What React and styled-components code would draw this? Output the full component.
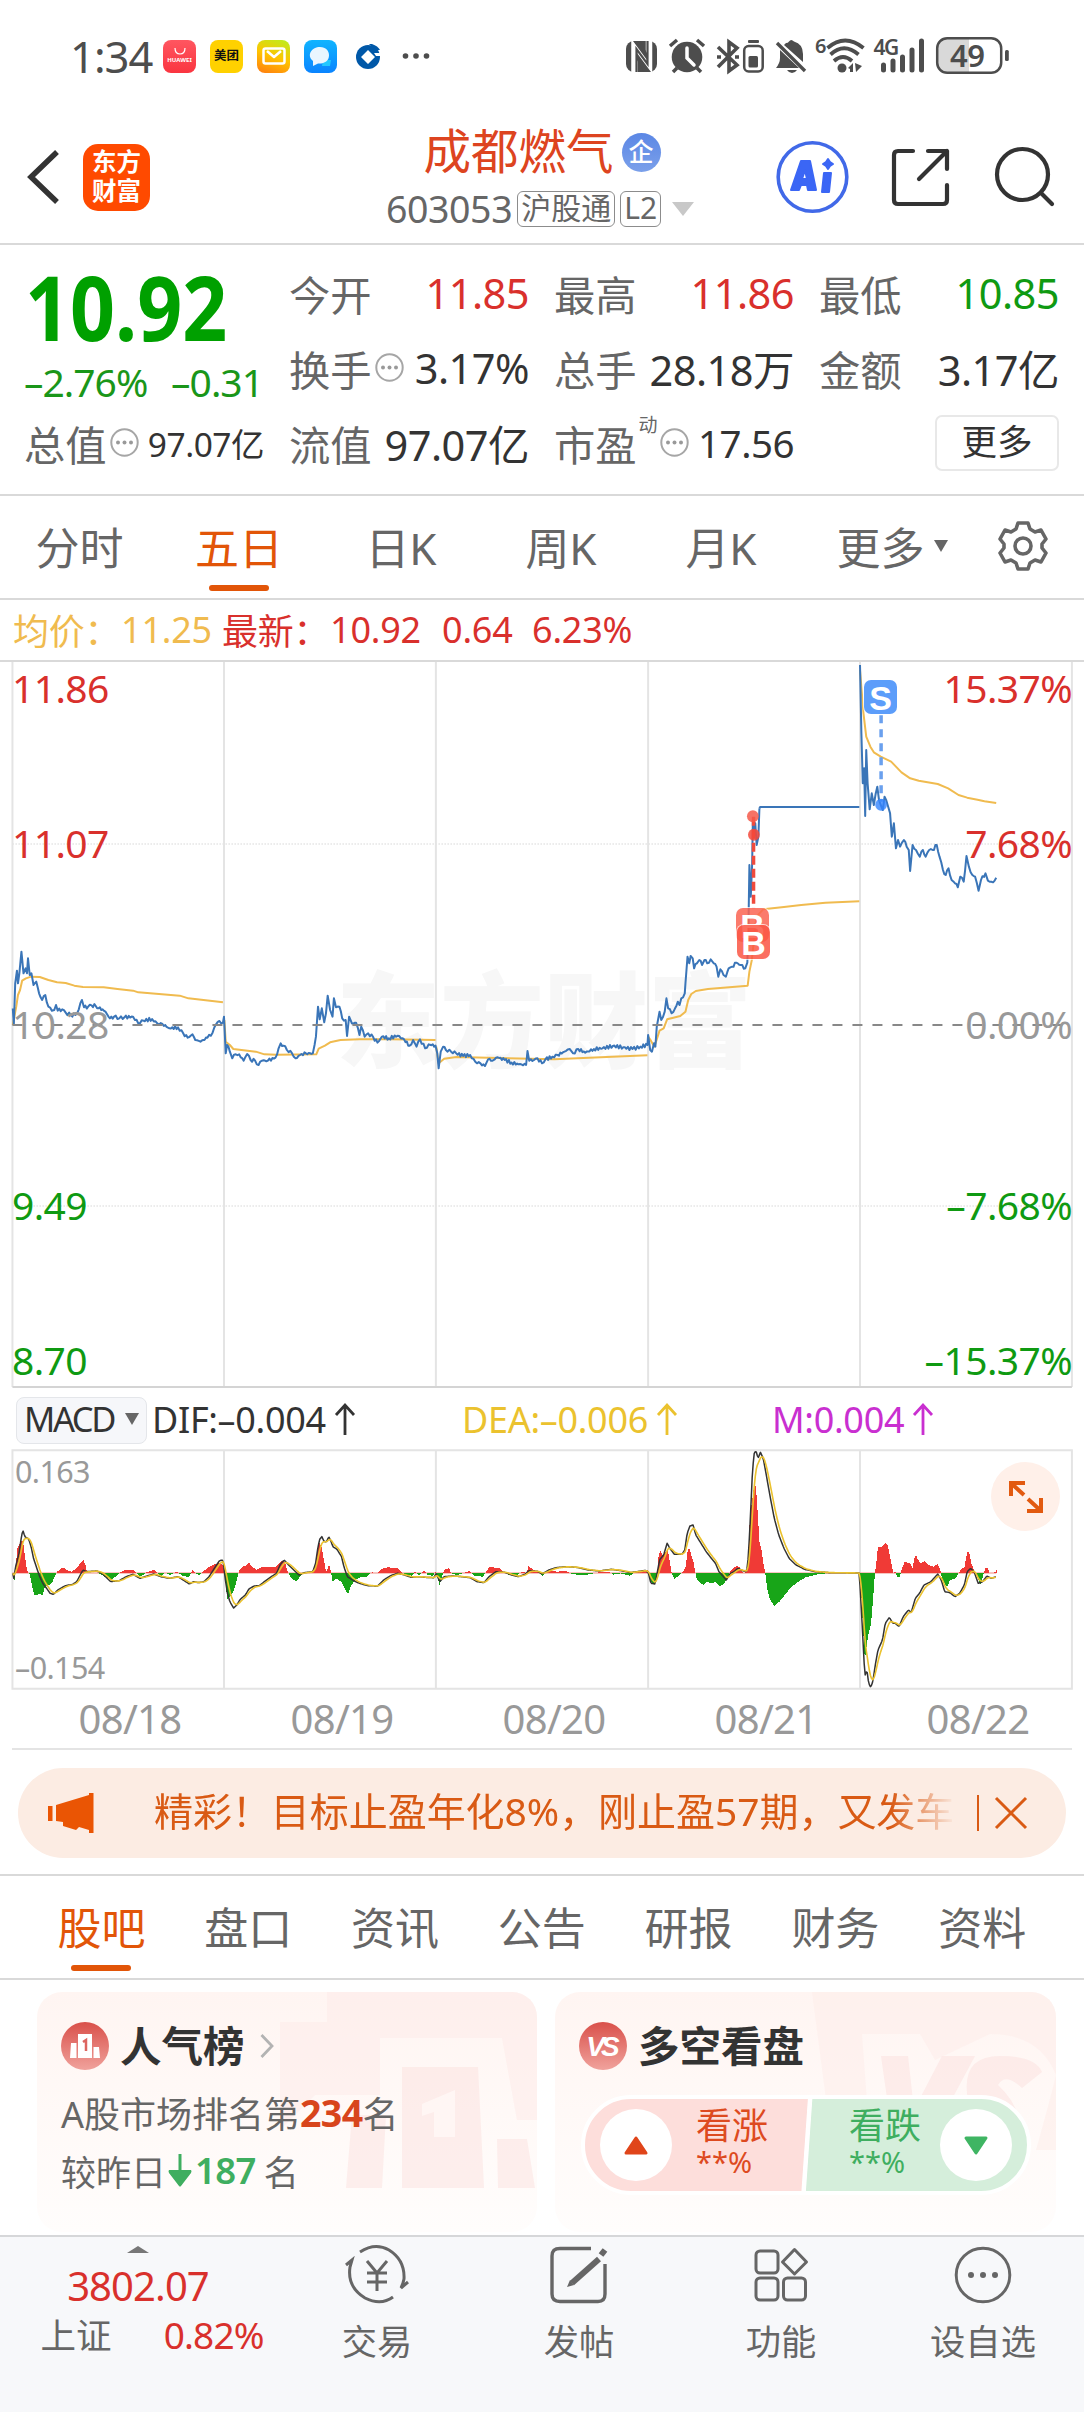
import styled, { createGlobalStyle } from 'styled-components';

const colors = {
     red: '#d9302c',
     green: '#0f9a12',
     brand: '#e25508',
     grey: '#666666',
     dark: '#333333',
     muted: '#999999',
     line: '#d9d9d9',
     price: '#3a75b8',
     average: '#f0bb4f',
};

const GlobalStyle = createGlobalStyle`
     * {
          box-sizing: border-box;
     }
     body {
          margin: 0;
          background: #ffffff;
          color: ${colors.dark};
          font-family: 'Noto Sans', 'Noto Sans CJK SC', sans-serif;
     }
     svg {
          display: block;
          flex: none;
          overflow: visible;
     }
`;

const Page = styled.div`
     width: 1084px;
     height: 2412px;
     overflow: hidden;
     display: flex;
     flex-direction: column;
`;

/* ---------- status bar ---------- */

const StatusBar = styled.div`
     height: 112px;
     padding: 0 74px 0 70px;
     display: flex;
     justify-content: space-between;
     flex: none;
`;

const StatusGroup = styled.div`
     height: 112px;
     display: flex;
     align-items: center;
`;

const Clock = styled.span`
     width: 93px;
     font-size: 43.5px;
     line-height: 50px;
     letter-spacing: -1px;
     color: #4d4d4d;
`;

const AppBadge = styled.span`
     width: 33px;
     height: 33px;
     margin-right: 14px;
     border-radius: 8px;
     display: flex;
     align-items: center;
     justify-content: center;
     background: ${({ $background }) => $background};
     color: ${({ $color }) => $color || '#ffffff'};
     font-size: ${({ $size }) => $size || 12.5}px;
     line-height: 16px;
     font-weight: 700;
     white-space: nowrap;
`;

const HuaweiName = styled.span`
     font-size: 6px;
     line-height: 8px;
     margin-top: 1px;
`;

const HuaweiBadge = styled(AppBadge)`
     flex-direction: column;
`;

/* ---------- header ---------- */

const Header = styled.header`
     height: 133px;
     display: grid;
     grid-template-columns: 300px 1fr 300px;
     border-bottom: 2px solid ${colors.line};
     flex: none;
`;

const HeaderSide = styled.div`
     height: 130px;
     display: flex;
     align-items: center;
     justify-content: ${({ $end }) => ($end ? 'flex-end' : 'flex-start')};
     padding: ${({ $end }) => ($end ? '0 30px 0 0' : '0 0 0 26px')};
     gap: ${({ $gap }) => $gap}px;
`;

const Logo = styled.div`
     width: 67px;
     height: 67px;
     border-radius: 15px;
     background: #ff4a00;
     color: #ffffff;
     font-size: 24.5px;
     line-height: 29px;
     font-weight: 700;
     text-align: center;
     padding-top: 3px;
`;

const HeaderCenter = styled.div`
     display: flex;
     flex-direction: column;
     align-items: center;
`;

const TitleRow = styled.div`
     height: 60px;
     margin-top: 9px;
     display: flex;
     align-items: center;
     gap: 8px;
     font-size: 47.5px;
     line-height: 60px;
     color: #dd4420;
`;

const CompanyBadge = styled.span`
     width: 39px;
     height: 39px;
     margin-top: 2px;
     border-radius: 50%;
     background: linear-gradient(#5b87e5, #7ba0ea);
     color: #ffffff;
     font-size: 25px;
     line-height: 37px;
     font-weight: 500;
     text-align: center;
`;

const CodeRow = styled.div`
     height: 55px;
     margin-right: 4px;
     display: flex;
     align-items: center;
     font-size: 37.5px;
     letter-spacing: -0.4px;
     color: ${colors.grey};
`;

const Tag = styled.span`
     height: 36px;
     margin-left: 5px;
     padding: 0 3px;
     border: 1.5px solid #8c8c8c;
     border-radius: 6px;
     font-size: 30px;
     line-height: 31px;
     letter-spacing: 0;
`;

const Caret = styled.span`
     width: 0;
     height: 0;
     border-left: ${({ $w }) => $w}px solid transparent;
     border-right: ${({ $w }) => $w}px solid transparent;
     border-top: ${({ $h }) => $h}px solid ${({ $color }) => $color};
     margin-left: ${({ $left }) => $left || 0}px;
`;

/* ---------- quote ---------- */

const Quote = styled.section`
     height: 251px;
     border-bottom: 2px solid ${colors.line};
     padding: 10px 25px 0 24px;
     display: grid;
     grid-template-columns: 265px 240px 25px 240px 25px 240px;
     grid-template-rows: 75px 75px 75px;
     flex: none;
`;

const PriceBox = styled.div`
     grid-row: span 2;
     color: #00a000;
     padding-top: 9px;
`;

const BigPrice = styled.div`
     font-size: 89px;
     line-height: 86px;
     font-weight: 700;
     margin-left: 1px;
     transform: scaleX(0.885);
     transform-origin: left;
`;

const ChangeRow = styled.div`
     display: flex;
     justify-content: space-between;
     width: 239px;
     margin-top: 9px;
     font-size: 39px;
     line-height: 46px;
     letter-spacing: -1px;
     color: #1a9619;
`;

const Cell = styled.div`
     height: 75px;
     display: flex;
     align-items: center;
     justify-content: space-between;
     width: ${({ $width }) => $width || 240}px;
     grid-column: ${({ $col }) => $col};
`;

const CellLabel = styled.span`
     display: flex;
     align-items: center;
     gap: 3px;
     font-size: 41.3px;
     color: ${colors.grey};
     white-space: nowrap;
`;

const CellValue = styled.span`
     font-size: ${({ $size }) => $size || 41.5}px;
     letter-spacing: -0.5px;
     white-space: nowrap;
     color: ${({ $color }) => $color || colors.dark};
`;

const Super = styled.sup`
     font-size: 19px;
     line-height: 20px;
     align-self: flex-start;
     margin: 2px -1px 0 -1px;
`;

const MoreButton = styled.button`
     width: 124px;
     height: 56px;
     margin-left: auto;
     border: 2px solid #e8e8e8;
     border-radius: 7px;
     background: #ffffff;
     font: inherit;
     font-size: 35.5px;
     line-height: 46px;
     padding: 0 0 4px;
     color: ${colors.dark};
`;

/* ---------- tabs ---------- */

const PeriodTabs = styled.nav`
     height: 104px;
     border-bottom: 2px solid ${colors.line};
     display: flex;
     flex: none;
`;

const Tab = styled.div`
     position: relative;
     width: ${({ $width }) => $width}px;
     height: 102px;
     padding-bottom: 3px;
     display: flex;
     align-items: center;
     justify-content: center;
     font-size: 44px;
     color: ${({ $active }) => ($active ? colors.brand : colors.grey)};
     &::after {
          content: '';
          display: ${({ $active }) => ($active ? 'block' : 'none')};
          position: absolute;
          bottom: 7px;
          left: calc(50% - 30px);
          width: 60px;
          height: 6px;
          border-radius: 3px;
          background: ${colors.brand};
     }
`;

const PriceLegend = styled.div`
     height: 62px;
     border-bottom: 2px solid ${colors.line};
     padding: 0 0 2px 13px;
     display: flex;
     align-items: center;
     font-size: 36px;
     letter-spacing: -0.2px;
     color: ${colors.red};
     flex: none;
     white-space: pre;
`;

const LegendItem = styled.span`
     width: ${({ $width }) => $width}px;
     color: ${({ $color }) => $color || colors.red};
`;

/* ---------- charts ---------- */

const PriceChart = styled.div`
     position: relative;
     height: 726px;
     flex: none;
`;

const Plot = styled.svg`
     width: 1084px;
     height: ${({ $height }) => $height}px;
`;

const Watermark = styled.div`
     position: absolute;
     left: 336px;
     top: 294px;
     font-size: 104px;
     line-height: 118px;
     font-weight: 900;
     font-family: 'Noto Sans CJK SC', sans-serif;
     color: #f7f7f7;
     z-index: -1;
`;

const AxisLabel = styled.span`
     position: absolute;
     top: ${({ $top }) => $top}px;
     ${({ $right, $left }) => ($right ? 'right: 12px;' : `left: ${$left || 12}px;`)}
     font-size: ${({ $size }) => $size || 39}px;
     line-height: 46px;
     letter-spacing: -0.6px;
     color: ${({ $color }) => $color};
`;

const MarkerBadge = styled.span`
     position: absolute;
     left: ${({ $left }) => $left}px;
     top: ${({ $top }) => $top}px;
     width: 33px;
     height: 34px;
     border-radius: 7px;
     background: ${({ $color }) => $color};
     box-shadow: 0 0 0 1px rgba(255, 255, 255, 0.7);
     color: #ffffff;
     font-family: 'Liberation Sans', sans-serif;
     font-size: 34px;
     line-height: 36px;
     font-weight: 700;
     text-align: center;
`;

const MacdLegend = styled.div`
     height: 62px;
     padding: 0 0 0 16px;
     display: flex;
     align-items: center;
     font-size: 36px;
     letter-spacing: -0.3px;
     flex: none;
`;

const MacdSelect = styled.div`
     width: 131px;
     height: 47px;
     margin: 3px 5px 0 0;
     padding: 0 0 4px 7px;
     border: 1.5px solid #e4e6ea;
     border-radius: 8px;
     background: #f6f7fa;
     display: flex;
     align-items: center;
     font-size: 34.5px;
     letter-spacing: -2.4px;
`;

const MacdItem = styled.span`
     display: flex;
     align-items: center;
     gap: 9px;
     width: ${({ $width }) => $width}px;
     color: ${({ $color }) => $color};
     white-space: nowrap;
`;

const MacdChart = styled.div`
     position: relative;
     height: 240px;
     flex: none;
`;

const ExpandButton = styled.div`
     position: absolute;
     left: 991px;
     top: 12px;
     width: 69px;
     height: 69px;
     border-radius: 50%;
     background: #fff0e9;
     display: flex;
     align-items: center;
     justify-content: center;
`;

const Dates = styled.div`
     height: 60px;
     margin: 0 12px;
     border-bottom: 2px solid #e4e4e4;
     display: grid;
     grid-template-columns: repeat(5, 1fr);
     text-align: center;
     font-size: 40px;
     line-height: 57px;
     letter-spacing: -0.7px;
     color: ${colors.muted};
     flex: none;
     & > span {
          padding-left: 24px;
     }
`;

/* ---------- notice ---------- */

const NoticeWrap = styled.div`
     height: 126px;
     padding: 18px;
     border-bottom: 2px solid ${colors.line};
     flex: none;
`;

const Notice = styled.div`
     height: 90px;
     border-radius: 45px;
     background: #fcece3;
     padding-left: 29px;
     display: flex;
     align-items: center;
     color: #d95a14;
`;

const NoticeText = styled.div`
     width: 810px;
     margin: 0 13px 4px 60px;
     overflow: hidden;
     white-space: nowrap;
     font-size: 39px;
     line-height: 60px;
     letter-spacing: -0.05px;
     mask-image: linear-gradient(90deg, #000 91%, transparent 99%);
`;

const Divider = styled.span`
     width: 1.5px;
     height: 36px;
     margin-right: 15px;
     background: #d95a14;
`;

const SectionTabs = styled.nav`
     height: 104px;
     padding-left: 28px;
     border-bottom: 2px solid ${colors.line};
     display: flex;
     flex: none;
`;

/* ---------- cards ---------- */

const Cards = styled.div`
     height: 255px;
     padding: 12px 28px 0 37px;
     display: grid;
     grid-template-columns: 500px 501px;
     gap: 18px;
     flex: none;
`;

const Card = styled.div`
     position: relative;
     height: 240px;
     border-radius: 25px;
     overflow: hidden;
     padding: 24px 24px 0;
     background: linear-gradient(#fff5f2, #fff9f7 50%, #fffdfc);
`;

const CardArt = styled.svg`
     position: absolute;
     right: 0;
     top: 0;
`;

const CardTitle = styled.div`
     position: relative;
     display: flex;
     align-items: center;
     height: 60px;
     font-size: 41.5px;
     font-weight: 700;
     & > svg:first-child {
          margin-right: 11px;
     }
     & > span {
          padding-bottom: 4px;
     }
`;

const CardLine = styled.div`
     display: flex;
     align-items: center;
     position: relative;
     height: 58px;
     margin-top: ${({ $first }) => ($first ? 7 : 0)}px;
     font-size: ${({ $first }) => ($first ? 36 : 35)}px;
     color: ${colors.grey};
     white-space: nowrap;
`;

const Strong = styled.b`
     font-size: ${({ $size }) => $size}px;
     font-weight: ${({ $weight }) => $weight};
     letter-spacing: -0.6px;
     margin: ${({ $margin }) => $margin || 0};
     color: ${({ $color }) => $color};
`;

const Pill = styled.div`
     position: relative;
     display: flex;
     width: 450px;
     height: 100px;
     margin: 19px 0 0 2px;
     border: 4px solid #ffffff;
     border-radius: 50px;
     overflow: hidden;
     background: linear-gradient(94deg, #fddedb 49.6%, #ffffff 49.8%, #ffffff 50.6%, #d5eedb 50.8%);
`;

const PillHalf = styled.div`
     flex: 1;
     display: flex;
     flex-direction: ${({ $reverse }) => ($reverse ? 'row-reverse' : 'row')};
     align-items: center;
     padding: 0 15px;
     gap: ${({ $reverse }) => ($reverse ? 19 : 24)}px;
     color: ${({ $color }) => $color};
`;

const PillButton = styled.span`
     width: 72px;
     height: 72px;
     border-radius: 50%;
     background: #ffffff;
     display: flex;
     align-items: center;
     justify-content: center;
`;

const PillText = styled.span`
     font-size: 36px;
     line-height: 40px;
     padding-bottom: 6px;
     & > small {
          display: block;
          font-size: 29px;
          line-height: 32px;
     }
`;

/* ---------- bottom bar ---------- */

const BottomBar = styled.footer`
     height: 177px;
     border-top: 2px solid #d6d7d9;
     background: #f7f8fa;
     display: flex;
     flex: none;
`;

const IndexBox = styled.div`
     width: 276px;
     padding-top: 9px;
     display: flex;
     flex-direction: column;
     align-items: center;
     color: ${colors.red};
`;

const IndexValue = styled.div`
     margin-top: 8px;
     font-size: 40px;
     line-height: 50px;
     letter-spacing: -0.9px;
`;

const IndexRow = styled.div`
     width: 223px;
     margin: -1px 0 0 28px;
     display: flex;
     justify-content: space-between;
     font-size: 37px;
     line-height: 50px;
     letter-spacing: -0.9px;
     & > span {
          font-size: 35.5px;
          letter-spacing: 0;
          color: ${colors.grey};
     }
`;

const NavItem = styled.div`
     width: 202px;
     padding-top: 8px;
     display: flex;
     flex-direction: column;
     align-items: center;
     font-size: 35.3px;
     line-height: 50px;
     color: ${colors.grey};
     & > span {
          margin-top: 11px;
     }
`;

/* Chart series, one array per trading day. x runs 0-3136 over the screen width,
   y has three units per pixel. */
const priceDays = [
     [37,1075,40,1125,44,1000,49,962,52,1000,56,970,62,905,68,970,74,955,78,970,81,925,86,975,91,970,97,1005,105,995,113,1030,122,1050,131,1035,140,1070,150,1082,157,1080,162,1065,167,1082,180,1078,190,1088,205,1095,218,1095,228,1078,237,1050,243,1072,255,1070,265,1066,277,1068,285,1075,297,1078,305,1085,318,1105,330,1100,345,1105,360,1102,385,1100,400,1120,415,1112,440,1107,455,1120,470,1122,490,1135,515,1132,530,1150,543,1163,557,1153,565,1170,580,1175,600,1163,615,1148,625,1123,635,1113,645,1118,
     648,1100,653,1210,657,1185,665,1205,672,1225,682,1213,692,1213,705,1232,715,1212,725,1230,738,1232,748,1245,758,1232,775,1232,797,1223,806,1195,812,1180,820,1187,830,1200,845,1210,855,1225,868,1215,885,1210,905,1210,910,1185,914,1160,920,1070,925,1108,931,1075,938,1117,943,1090,948,1037,955,1080,962,1100,966,1045,972,1072,982,1070,990,1105,1000,1110,1004,1158,1010,1100,1018,1120,1030,1118,1040,1155,1045,1130,1055,1160,1065,1150,1080,1162,1092,1178,1105,1160,1125,1165,1150,1157,1165,1165,1185,1187,1195,1170,1205,1190,1215,1168,1230,1195,1240,1183,1260,1187,
     1265,1210,1269,1255,1275,1205,1282,1190,1290,1200,1305,1205,1320,1210,1340,1218,1360,1215,1375,1235,1390,1240,1403,1248,1412,1228,1425,1232,1440,1222,1460,1230,1480,1238,1500,1243,1522,1245,1526,1203,1531,1232,1545,1230,1555,1225,1568,1240,1578,1228,1598,1220,1613,1215,1633,1205,1648,1197,1658,1210,1673,1197,1693,1208,1718,1197,1743,1195,1773,1188,1803,1192,1830,1197,1853,1190,1873,1185,
     1875,1155,1881,1200,1886,1205,1892,1180,1896,1190,1900,1130,1908,1085,1913,1110,1923,1085,1928,1045,1933,1075,1943,1090,1953,1075,1961,1055,1966,1065,1971,1045,1981,1030,1983,1000,1986,960,1989,920,1994,940,1998,918,2004,925,2008,955,2016,940,2023,930,2031,945,2038,930,2046,940,2056,928,2065,940,2073,950,2078,980,2084,958,2093,975,2100,980,2108,955,2118,950,2130,938,2143,945,2156,955,2162,938,2165,850,2168,645,2172,740,2176,640,2178,510,2181,560,2185,520,2189,585,2194,560,2197,475],
     [2488,45,2492,250,2496,400,2500,355,2503,498,2506,300,2510,400,2516,478,2522,430,2528,465,2538,410,2543,450,2548,465,2554,480,2559,440,2568,465,2575,490,2580,560,2586,520,2592,595,2598,570,2604,590,2615,570,2623,590,2629,600,2633,663,2640,585,2650,600,2661,620,2670,600,2678,620,2688,600,2698,600,2710,585,2718,620,2728,660,2736,675,2744,655,2753,690,2763,700,2771,712,2778,680,2788,695,2796,618,2803,650,2813,675,2821,680,2831,722,2838,690,2851,670,2858,692,2873,697,2882,683],
];

const averageDays = [
     [37,1125,47,1070,52,1035,58,1020,64,992,75,985,90,980,115,981,140,990,165,997,190,999,215,1007,240,1011,300,1012,340,1017,385,1022,400,1027,520,1037,545,1045,645,1057],
     [649,1110,653,1175,665,1185,675,1197,740,1205,765,1213,800,1214,915,1213,922,1196,940,1187,955,1177,985,1170,1040,1168,1130,1168,1260,1170],
     [1262,1190,1269,1240,1285,1226,1320,1221,1568,1227,1603,1228,1873,1216],
     [1875,1160,1883,1172,1893,1190,1901,1165,1908,1142,1920,1135,1930,1108,1948,1103,1968,1098,1983,1085,1991,1050,2000,1032,2013,1023,2048,1017,2163,1007,2168,965,2175,930,2180,880,2188,800,2208,778,2268,771,2318,765,2388,758,2486,754],
     [2488,60,2498,190,2506,260,2518,290,2528,307,2548,320,2578,335,2608,367,2633,385,2658,392,2713,402,2743,415,2773,435,2798,443,2828,449,2848,454,2882,459],
];

const ZERO = 429;

const histogram = [37,445,40,450,44,400,49,350,53,345,57,335,62,330,66,345,70,380,76,420,80,428,84,432,90,465,97,495,110,493,122,494,128,470,140,465,150,455,158,435,163,425,180,412,192,420,205,425,220,415,230,400,239,390,245,405,250,428,285,430,300,440,320,448,332,440,345,428,360,420,385,420,392,428,405,440,420,428,445,419,455,430,465,438,475,428,490,435,510,425,525,437,545,442,555,420,563,430,575,435,585,425,600,412,630,398,640,402,647,420,650,450,655,508,665,498,675,480,683,450,690,420,700,410,712,405,718,396,725,408,740,420,755,412,795,412,812,392,822,395,830,425,840,443,855,455,870,435,880,427,905,425,912,400,918,350,922,338,928,350,935,390,941,425,946,415,950,402,956,428,960,455,970,445,985,455,995,475,1005,493,1012,470,1025,450,1040,442,1060,440,1070,430,1075,427,1090,430,1100,417,1120,412,1150,415,1160,428,1175,435,1190,437,1198,425,1210,437,1225,420,1235,435,1250,437,1258,425,1264,440,1269,468,1275,445,1283,420,1297,414,1303,430,1320,436,1355,423,1370,437,1395,440,1405,425,1412,412,1440,413,1455,425,1470,435,1490,437,1510,425,1522,430,1527,407,1535,415,1560,430,1568,438,1573,430,1588,423,1613,425,1633,422,1648,430,1678,436,1703,433,1723,428,1758,425,1773,434,1793,430,1821,437,1833,428,1868,420,1874,422,1878,445,1886,462,1893,460,1899,430,1903,380,1908,360,1915,375,1923,365,1930,360,1935,390,1941,430,1950,447,1963,435,1976,422,1982,410,1986,370,1991,352,1998,375,2005,400,2009,425,2013,445,2023,458,2033,465,2043,455,2058,460,2068,455,2080,470,2093,460,2103,440,2113,420,2128,408,2138,412,2148,428,2158,427,2162,400,2165,300,2169,250,2174,210,2180,165,2185,170,2190,250,2195,335,2201,360,2208,410,2212,430,2218,480,2226,510,2238,527,2253,515,2268,495,2288,470,2308,455,2328,442,2358,434,2388,430,2486,428,2490,500,2495,600,2500,690,2506,640,2511,610,2518,580,2525,490,2529,430,2534,390,2538,350,2548,350,2555,345,2560,338,2566,345,2571,370,2576,395,2582,430,2588,423,2593,440,2601,440,2606,420,2615,395,2633,402,2638,415,2643,385,2648,375,2654,390,2663,400,2673,392,2683,405,2698,410,2710,402,2718,420,2723,445,2733,465,2740,470,2746,450,2763,445,2771,430,2778,418,2788,412,2796,365,2802,368,2808,400,2818,425,2826,440,2833,465,2840,445,2848,415,2855,413,2861,430,2870,430,2878,425,2882,418];

const dif = [37,430,40,445,45,410,55,370,62,320,66,300,72,320,83,327,90,350,97,385,105,410,115,440,125,462,135,475,145,490,155,493,165,482,175,475,190,467,210,463,222,455,232,435,240,420,250,425,280,423,295,430,310,445,320,455,345,452,365,440,385,433,405,445,425,438,445,432,465,440,490,445,515,440,530,450,548,462,560,455,575,458,590,455,605,440,620,415,635,392,645,390,652,450,658,490,665,515,676,534,685,525,695,508,710,495,720,477,735,468,750,467,765,455,785,440,800,430,810,405,822,390,835,405,850,420,865,435,880,428,905,425,913,400,920,350,925,328,931,320,938,335,945,335,951,320,958,335,963,350,975,358,988,380,995,410,1005,440,1020,450,1035,458,1050,463,1065,467,1092,468,1110,450,1130,437,1150,430,1170,435,1190,442,1210,440,1230,442,1255,443,1262,430,1272,455,1285,440,1310,438,1335,440,1360,443,1380,455,1400,458,1415,440,1435,425,1460,427,1480,435,1500,440,1520,432,1530,422,1555,424,1568,432,1588,420,1608,413,1638,410,1668,412,1703,420,1733,423,1768,418,1798,422,1823,428,1868,421,1876,430,1883,460,1895,462,1901,430,1908,390,1920,375,1930,340,1938,355,1951,373,1973,373,1981,360,1988,310,1996,288,2005,285,2013,315,2028,340,2043,365,2058,385,2070,400,2080,425,2093,440,2101,450,2113,430,2123,425,2135,415,2148,422,2160,425,2165,380,2171,260,2177,120,2182,70,2187,62,2193,85,2200,67,2208,85,2216,130,2228,200,2240,265,2253,315,2268,355,2283,385,2303,405,2328,418,2358,425,2398,428,2486,429,2493,560,2500,700,2503,735,2508,720,2513,760,2519,772,2525,755,2533,700,2540,660,2553,630,2561,580,2573,562,2583,580,2590,580,2601,590,2613,560,2628,540,2636,548,2648,505,2660,490,2673,465,2693,455,2713,432,2723,450,2733,485,2748,488,2763,500,2776,490,2790,465,2798,425,2808,415,2818,425,2830,460,2843,455,2855,438,2868,445,2882,440];

// Resamples a flat [x, y, x, y...] list at a fixed step.
function resample(flat, step) {
     const points = [];
     let i = 0;
     for (let x = flat[0]; x <= flat[flat.length - 2]; x += step) {
          while (i < flat.length - 4 && flat[i + 2] < x) i += 2;
          const ratio = (x - flat[i]) / (flat[i + 2] - flat[i]);
          points.push([x, flat[i + 1] + (flat[i + 3] - flat[i + 1]) * ratio]);
     }
     return points;
}

function withTicks(flat) {
     const points = [];
     for (let i = 0; i < flat.length; i += 2) {
          points.push([flat[i], flat[i + 1]]);
          const gap = flat[i + 2] - flat[i];
          const count = Math.floor(gap / 4);
          for (let k = 1; k < count; k++) {
               const ratio = k / count;
               const tick = Math.sin(flat[i] * 12.9898 + k * 78.233) * 5;
               points.push([
                    flat[i] + gap * ratio,
                    flat[i + 1] + (flat[i + 3] - flat[i + 1]) * ratio + tick,
               ]);
          }
     }
     return points;
}

function toPairs(flat) {
     return flat.reduce((all, value, index) => {
          if (index % 2 === 0) all.push([value, flat[index + 1]]);
          return all;
     }, []);
}

function smooth(points, alpha) {
     let last = points[0][1];
     return points.map(([x, y]) => {
          last += (y - last) * alpha;
          return [x, last];
     });
}

function Line({ points, color, width = 2 }) {
     return (
          <polyline
               points={points.map((p) => p.join(',')).join(' ')}
               fill="none"
               stroke={color}
               strokeWidth={width}
               strokeLinejoin="round"
               vectorEffect="non-scaling-stroke"
          />
     );
}

function InfoDots() {
     return (
          <svg width="29" height="29" viewBox="0 0 29 29">
               <circle cx="14.5" cy="14.5" r="13.2" fill="none" stroke="#a6a6a6" strokeWidth="2" />
               <g fill="#999">
                    <circle cx="8" cy="14.5" r="2" />
                    <circle cx="14.5" cy="14.5" r="2" />
                    <circle cx="21" cy="14.5" r="2" />
               </g>
          </svg>
     );
}

function UpArrow() {
     return (
          <svg width="20" height="32" viewBox="0 0 20 32" fill="none" stroke="currentColor" strokeWidth="2.8">
               <path d="M10 32V3M1 12L10 2L19 12" />
          </svg>
     );
}

function StatusIcons() {
     return (
          <svg width="384" height="38" viewBox="627 37 384 38" fill="#4d4d4d">
               {/* nfc */}
               <rect x="627" y="41" width="31" height="31" rx="8" />
               <path d="M635.5 41V72M650 41V72M635.5 46L650 68" stroke="#fff" strokeWidth="6.5" fill="none" />
               <path d="M637.5 72V49L648.500 64V41" stroke="#4d4d4d" strokeWidth="2.200" fill="none" />
               <path d="M634 41H641L648 53V60ZM652 72H645L638 60V53Z" />
               {/* alarm */}
               <circle cx="688" cy="57" r="15.3" />
               <path d="M671 46L678 40M705 46L698 40M678 68L674 72M698 68L702 72" stroke="#4d4d4d" strokeWidth="3.5" />
               <path d="M688 48V58L695 65" stroke="#fff" strokeWidth="3.5" fill="none" strokeLinecap="round" />
               {/* bluetooth and device battery */}
               <path d="M719 47L738 65L730 71V42L738 48L719 67" stroke="#4d4d4d" strokeWidth="3.6" fill="none" />
               <path d="M718 57h4M736 57h4" stroke="#4d4d4d" strokeWidth="3.6" />
               <rect x="745.2" y="46" width="18.5" height="25.5" rx="4.5" fill="none" stroke="#4d4d4d" strokeWidth="2.5" />
               <rect x="749" y="40" width="11" height="3" rx="1" />
               <rect x="749.5" y="56" width="9.5" height="11.5" rx="1.5" />
               {/* muted bell */}
               <path d="M787 43Q789 43 790 41.5Q792 38.5 795 41.5Q804 44 804 54V62L785 45ZM781 50L800 68H777Q781 63 781 58Z" />
               <path d="M778 43L806 71" stroke="#4d4d4d" strokeWidth="3.4" />
               <path d="M788 70H798Q796 73 793 73Q790 73 788 70Z" />
               {/* wifi */}
               <text x="816" y="53" fontSize="20" fontWeight="600">6</text>
               <g fill="none" stroke="#4d4d4d" strokeWidth="3.8">
                    <path d="M828.500 48Q846 33 864.500 48" />
                    <path d="M831.500 54.500Q845 42 859.500 54.500" />
                    <path d="M835 61Q844 53 853 61" />
               </g>
               <circle cx="843" cy="68" r="4.500" />
               <path d="M849 68L854 63V72H851V69ZM856 63L863 66L857 72Z" />
               {/* signal */}
               <text x="874.500" y="54.500" fontSize="21" fontWeight="600" letterSpacing="-1.500">4G</text>
               <g stroke="#4d4d4d" strokeWidth="5" strokeLinecap="round">
                    <path d="M884.500 65V70M894 61V70M903.500 57V70M913 50V70M922.500 41V70" />
               </g>
               {/* battery */}
               <path d="M948 38.500H970V72.500H948Q938.500 72.500 938.500 63V48Q938.500 38.500 948 38.500Z" fill="#d9d9d9" />
               <rect x="938.2" y="38.2" width="64" height="34.600" rx="10" fill="none" stroke="#4d4d4d" strokeWidth="2.500" />
               <rect x="1006" y="50" width="3.800" height="11" rx="1.500" />
               <text x="951" y="66.500" fontSize="31" fontWeight="600" letterSpacing="-0.500">49</text>
          </svg>
     );
}

function GearIcon() {
     return (
          <svg width="52" height="52" viewBox="0 0 52 52" fill="none" stroke="#666" strokeWidth="3.600" strokeLinejoin="round">
               <path d="M21 3H31L33 9L38 12L44 10L49 19L45 24V28L49 33L44 42L38 40L33 43L31 49H21L19 43L14 40L8 42L3 33L7 28V24L3 19L8 10L14 12L19 9Z" />
               <circle cx="26" cy="26" r="8" />
          </svg>
     );
}

function StockHeader() {
     return (
          <Header>
               <HeaderSide $gap={25}>
                    <svg width="32" height="54" viewBox="26 150 32 54" fill="none" stroke="#333" strokeWidth="5.500">
                         <path d="M57 152L31 177L57 202" />
                    </svg>
                    <Logo>
                         东方
                         <br />
                         财富
                    </Logo>
               </HeaderSide>
               <HeaderCenter>
                    <TitleRow>
                         成都燃气<CompanyBadge>企</CompanyBadge>
                    </TitleRow>
                    <CodeRow>
                         603053
                         <Tag>沪股通</Tag>
                         <Tag>L2</Tag>
                         <Caret $w={11} $h={14} $color="#c8c8c8" $left={11} />
                    </CodeRow>
               </HeaderCenter>
               <HeaderSide $end $gap={0}>
                    <svg width="278" height="72" viewBox="776 141 278 72" fill="none" stroke="#333" strokeWidth="4.200" strokeLinecap="round" strokeLinejoin="round">
                         <circle cx="812.500" cy="177" r="34.300" stroke="#4169e8" strokeWidth="3.600" />
                         <g fill="#3b66f5" stroke="#3b66f5" strokeWidth="2">
                              <path fillRule="evenodd" d="M801 161H810L816 190H808L807 185H801L799 190H791ZM805 170L802 179H807Z" />
                              <path d="M824 173H831L829 192H822ZM828 159L830 162L833 164L830 166L828 169L826 166L823 164L826 162Z" />
                         </g>
                         <path d="M913 151H898Q894 151 894 155V200Q894 204 898 204H943Q947 204 947 200V185M928 151H947V169M947 151L919 179" />
                         <circle cx="1022.500" cy="174.500" r="25.500" />
                         <path d="M1041 193L1052 204" />
                    </svg>
               </HeaderSide>
          </Header>
     );
}

function QuotePanel() {
     return (
          <Quote>
               <PriceBox>
                    <BigPrice>10.92</BigPrice>
                    <ChangeRow>
                         <span>–2.76%</span>
                         <span>–0.31</span>
                    </ChangeRow>
               </PriceBox>
               <Cell $col={2}>
                    <CellLabel>今开</CellLabel>
                    <CellValue $color={colors.red}>11.85</CellValue>
               </Cell>
               <Cell $col={4}>
                    <CellLabel>最高</CellLabel>
                    <CellValue $color={colors.red}>11.86</CellValue>
               </Cell>
               <Cell $col={6}>
                    <CellLabel>最低</CellLabel>
                    <CellValue $color={colors.green}>10.85</CellValue>
               </Cell>
               <Cell $col={2}>
                    <CellLabel>换手<InfoDots /></CellLabel>
                    <CellValue>3.17%</CellValue>
               </Cell>
               <Cell $col={4}>
                    <CellLabel>总手</CellLabel>
                    <CellValue>28.18万</CellValue>
               </Cell>
               <Cell $col={6}>
                    <CellLabel>金额</CellLabel>
                    <CellValue>3.17亿</CellValue>
               </Cell>
               <Cell $col={1} $width={240}>
                    <CellLabel>总值<InfoDots /></CellLabel>
                    <CellValue $size={33.5}>97.07亿</CellValue>
               </Cell>
               <Cell $col={2}>
                    <CellLabel>流值</CellLabel>
                    <CellValue>97.07亿</CellValue>
               </Cell>
               <Cell $col={4}>
                    <CellLabel>
                         市盈<Super>动</Super>
                         <InfoDots />
                    </CellLabel>
                    <CellValue $size={38.5}>17.56</CellValue>
               </Cell>
               <Cell $col={6}>
                    <MoreButton>更多</MoreButton>
               </Cell>
          </Quote>
     );
}

function PriceChartPanel() {
     return (
          <PriceChart>
               <Watermark>东方财富</Watermark>
               <Plot $height={726} viewBox="0 36 3136 2178" preserveAspectRatio="none">
                    <g stroke="#e4e4e4" strokeWidth="2">
                         {[36, 648, 1261, 1875, 2488, 3101].map((x) => (
                              <path key={x} d={`M${x} 36V2211`} vectorEffect="non-scaling-stroke" />
                         ))}
                         <path d="M36 582H3101M36 1668H3101" strokeWidth="1.500" strokeDasharray="1.500 1.500" vectorEffect="non-scaling-stroke" />
                         <path d="M36 2211H3101" stroke="#d4d4d4" vectorEffect="non-scaling-stroke" />
                    </g>
                    {averageDays.map((day, index) => (
                         <Line key={`average-${index}`} points={toPairs(day)} color={colors.average} />
                    ))}
                    {priceDays.map((day, index) => (
                         <Line key={`price-${index}`} points={withTicks(day)} color={colors.price} />
                    ))}
                    <Line points={[[2197, 475], [2199, 471], [2486, 471]]} color={colors.price} />
                    <path d="M36 1125H3101" stroke="#888" strokeWidth="2" strokeDasharray="10 10" vectorEffect="non-scaling-stroke" />
                    <path d="M2549 196V455" stroke="#6aa0ee" strokeWidth="3.500" strokeDasharray="8 6" vectorEffect="non-scaling-stroke" />
                    <path d="M2180 500V775" stroke="#f04a3c" strokeWidth="3.500" strokeDasharray="9 4" vectorEffect="non-scaling-stroke" />
                    <ellipse cx="2549" cy="464" rx="17" ry="18" fill="#3385ff" opacity=".8" />
                    <ellipse cx="2178" cy="499" rx="17" ry="18" fill="#f5594a" opacity=".85" />
                    <ellipse cx="2181" cy="554" rx="17" ry="18" fill="#f5483a" opacity=".85" />
               </Plot>
               <AxisLabel $top={3} $color={colors.red}>11.86</AxisLabel>
               <AxisLabel $top={158} $color={colors.red}>11.07</AxisLabel>
               <AxisLabel $top={339} $color={colors.muted}>10.28</AxisLabel>
               <AxisLabel $top={520} $color={colors.green}>9.49</AxisLabel>
               <AxisLabel $top={675} $color={colors.green}>8.70</AxisLabel>
               <AxisLabel $right $top={3} $color={colors.red}>15.37%</AxisLabel>
               <AxisLabel $right $top={158} $color={colors.red}>7.68%</AxisLabel>
               <AxisLabel $right $top={339} $color={colors.muted}>0.00%</AxisLabel>
               <AxisLabel $right $top={520} $color={colors.green}>–7.68%</AxisLabel>
               <AxisLabel $right $top={675} $color={colors.green}>–15.37%</AxisLabel>
               <MarkerBadge $left={864} $top={18} $color="#5c9dfa">S</MarkerBadge>
               <MarkerBadge $left={736} $top={246} $color="rgba(250, 100, 82, .85)">B</MarkerBadge>
               <MarkerBadge $left={737} $top={263} $color="rgba(250, 86, 68, .85)">B</MarkerBadge>
          </PriceChart>
     );
}

function MacdPanel() {
     const bars = resample(histogram, 2.893);
     const difPoints = resample(dif, 3);
     return (
          <>
               <MacdLegend>
                    <MacdSelect>
                         MACD
                         <Caret $w={7} $h={12} $color="#666" $left={11} />
                    </MacdSelect>
                    <MacdItem $width={310} $color={colors.dark}>DIF:–0.004<UpArrow /></MacdItem>
                    <MacdItem $width={310} $color="#ebc22e">DEA:–0.006<UpArrow /></MacdItem>
                    <MacdItem $width={180} $color="#c92fd0">M:0.004<UpArrow /></MacdItem>
               </MacdLegend>
               <MacdChart>
                    <Plot $height={240} viewBox="0 60 3136 720" preserveAspectRatio="none">
                         <g stroke="#e4e4e4" strokeWidth="2" fill="none">
                              {[648, 1261, 1875, 2488].map((x) => (
                                   <path key={x} d={`M${x} 60V776`} vectorEffect="non-scaling-stroke" />
                              ))}
                              <path d="M36 61H3101V776H36Z" vectorEffect="non-scaling-stroke" />
                         </g>
                         <path d="M36 429H2882" stroke="#f08a80" strokeWidth="1" vectorEffect="non-scaling-stroke" />
                         <g shapeRendering="crispEdges">
                              {bars.map(([x, y], index) => (
                                   <rect
                                        key={`bar-${index}`}
                                        x={x}
                                        y={Math.min(y, ZERO)}
                                        width="2.950"
                                        height={Math.abs(y - ZERO)}
                                        fill={y < ZERO ? '#f03a36' : '#18a518'}
                                   />
                              ))}
                         </g>
                         <Line points={difPoints} color="#333" width={1.5} />
                         <Line points={smooth(difPoints, 0.3)} color="#ebc22e" width={1.6} />
                    </Plot>
                    <AxisLabel $top={-2} $left={15} $size={30.5} $color={colors.muted}>0.163</AxisLabel>
                    <AxisLabel $top={194} $left={15} $size={30.5} $color={colors.muted}>–0.154</AxisLabel>
                    <ExpandButton>
                         <svg width="36" height="36" viewBox="0 0 36 36" fill="none" stroke="#e25a10" strokeWidth="4">
                              <path d="M3 17V4H17M4 5L16 16M33 19V32H19M32 31L20 20" />
                         </svg>
                    </ExpandButton>
               </MacdChart>
          </>
     );
}

function PopularityCard() {
     return (
          <Card>
               <CardArt width="260" height="240" viewBox="277 1992 260 240">
                    <path d="M327 1992H537V2120L517 2120L502 2038H380V2095H315L280 2130V2022H327Z" fill="#fdeae7" opacity=".5" />
                    <path d="M402 2067H478L484 2188H402ZM352 2115H386L382 2188H346ZM497 2139H527L535 2188H498Z" fill="#fbdedb" opacity=".45" />
                    <path d="M422 2104L455 2090V2137H434V2112L422 2116Z" fill="#fff6f4" />
               </CardArt>
               <CardTitle>
                    <svg width="48" height="48" viewBox="0 0 48 48">
                         <defs>
                              <linearGradient id="badge" x1="0" y1="0" x2="0" y2="1">
                                   <stop offset="0" stopColor="#d9504a" />
                                   <stop offset="1" stopColor="#f0a29c" />
                              </linearGradient>
                         </defs>
                         <circle cx="24" cy="24" r="24" fill="url(#badge)" />
                         <path d="M17 12H31V36H17ZM10 21H15.500V36H9ZM32.500 25H38L39 36H32.500Z" fill="#fff" />
                         <path d="M22 20L25 18V29" stroke="#dd6560" strokeWidth="2.500" fill="none" />
                    </svg>
                    <span>人气榜</span>
                    <svg width="14" height="24" viewBox="0 0 14 24" fill="none" stroke="#b3b3b3" strokeWidth="2.800" style={{ marginLeft: 15 }}>
                         <path d="M1.500 1L12 12L1.500 23" />
                    </svg>
               </CardTitle>
               <CardLine $first>
                    A股市场排名第
                    <Strong $size={37.5} $weight={700} $color="#d8451c">234</Strong>名
               </CardLine>
               <CardLine>
                    较昨日
                    <svg width="24" height="34" viewBox="0 0 24 34" fill="#3fae60" style={{ marginLeft: 2 }}>
                         <path d="M10.500 1H13.500V17H23Q24 18 23 20L13 33Q12 34 11 33L1 20Q0 18 1 17H10.500Z" />
                    </svg>
                    <Strong $size={36.5} $weight={600} $color="#3fae60" $margin="0 8px 0 3px">187</Strong>名
               </CardLine>
          </Card>
     );
}

function VersusCard() {
     return (
          <Card>
               <CardArt width="250" height="240" viewBox="806 1992 250 240">
                    <path d="M812 1992H1056V2150H1036Q1050 2100 1056 2075Q1040 2034 990 2034L935 2060L920 2034H862L868 2115H828Z" fill="#fdecea" opacity=".55" />
                    <path d="M881 2056H908L914 2110L942 2056H975L930 2140H893ZM1042 2072L1022 2088Q1005 2072 998 2085Q1025 2110 1018 2140H950Q980 2125 968 2100Q960 2056 1000 2056Q1035 2056 1042 2072Z" fill="#fbe0dd" opacity=".5" />
               </CardArt>
               <CardTitle>
                    <svg width="48" height="48" viewBox="0 0 48 48">
                         <circle cx="24" cy="24" r="24" fill="url(#badge)" />
                         <text x="22" y="34" textAnchor="middle" fontFamily="Liberation Sans" fontStyle="italic" fontWeight="700" fontSize="28" letterSpacing="-4" fill="#fff">VS</text>
                    </svg>
                    <span>多空看盘</span>
               </CardTitle>
               <Pill>
                    <PillHalf $color="#dd4a20">
                         <PillButton>
                              <svg width="24" height="19" viewBox="0 0 24 19">
                                   <path d="M12 2L22 17H2Z" fill="#e0451a" stroke="#e0451a" strokeWidth="3" strokeLinejoin="round" />
                              </svg>
                         </PillButton>
                         <PillText>看涨<small>**%</small></PillText>
                    </PillHalf>
                    <PillHalf $reverse $color="#3fae60">
                         <PillButton>
                              <svg width="24" height="19" viewBox="0 0 24 19">
                                   <path d="M12 17L22 2H2Z" fill="#3fb563" stroke="#3fb563" strokeWidth="3" strokeLinejoin="round" />
                              </svg>
                         </PillButton>
                         <PillText>看跌<small>**%</small></PillText>
                    </PillHalf>
               </Pill>
          </Card>
     );
}

function Footer() {
     const icon = { width: 64, height: 60, viewBox: '0 0 64 60', fill: 'none', stroke: '#666', strokeWidth: 3 };
     return (
          <BottomBar>
               <IndexBox>
                    <svg width="22" height="7" viewBox="0 0 22 7"><path d="M0 7L11 0L22 7Z" fill="#777" /></svg>
                    <IndexValue>3802.07</IndexValue>
                    <IndexRow><span>上证</span>0.82%</IndexRow>
               </IndexBox>
               <NavItem>
                    <svg {...icon}>
                         <path d="M15 7Q30 -3 44 5Q60 15 59 34Q58 39 56 43L63 37M48 52Q36 61 20 53Q2 42 5 22L7 15L1 20" />
                         <path d="M22 16L32 28L42 16M32 28V46M22 28H42M22 37H42" />
                    </svg>
                    <span>交易</span>
               </NavItem>
               <NavItem>
                    <svg {...icon}>
                         <path d="M44 3.500H13Q5 3.500 5 11V49Q5 56.500 13 56.500H51Q58 56.500 58 49V19" strokeWidth="3.400" />
                         <path d="M52 14L25 38" strokeWidth="6" />
                         <path d="M20 42L27 40L23 35Z" fill="#666" stroke="none" />
                         <path d="M54 10L58 5" strokeWidth="6" />
                    </svg>
                    <span>发帖</span>
               </NavItem>
               <NavItem>
                    <svg {...icon}>
                         <rect x="7" y="6" width="22" height="22" rx="4" />
                         <rect x="7" y="33" width="22" height="22" rx="4" />
                         <rect x="34.500" y="33" width="22" height="22" rx="4" />
                         <path d="M45.500 4.500L57.500 17L45.500 29L33.500 17Z" strokeLinejoin="round" />
                    </svg>
                    <span>功能</span>
               </NavItem>
               <NavItem>
                    <svg {...icon}>
                         <circle cx="32" cy="30" r="26.800" />
                         <g fill="#666" stroke="none">
                              <circle cx="20" cy="30" r="3" />
                              <circle cx="32" cy="30" r="3" />
                              <circle cx="44" cy="30" r="3" />
                         </g>
                    </svg>
                    <span>设自选</span>
               </NavItem>
          </BottomBar>
     );
}

const sections = ['股吧', '盘口', '资讯', '公告', '研报', '财务', '资料'];
const dates = ['08/18', '08/19', '08/20', '08/21', '08/22'];

function App() {
     return (
          <Page>
               <GlobalStyle />
               <StatusBar>
                    <StatusGroup>
                         <Clock>1:34</Clock>
                         <HuaweiBadge $background="linear-gradient(#ff5660, #fa3540)">
                              <svg width="12" height="7" viewBox="0 0 12 7" fill="none" stroke="#fff" strokeWidth="1.200"><path d="M1 0Q1 6 6 6Q11 6 11 0" /></svg>
                              <HuaweiName>HUAWEI</HuaweiName>
                         </HuaweiBadge>
                         <AppBadge $background="#ffd100" $color="#111">美团</AppBadge>
                         <AppBadge $background="linear-gradient(20deg, #ff7a10, #ffc400 50%, #b8f020)">
                              <svg width="24" height="18" viewBox="0 0 24 18" fill="none" stroke="#fff" strokeWidth="2.500" strokeLinejoin="round">
                                   <rect x="1.500" y="1.500" width="21" height="15" rx="2" />
                                   <path d="M5 4L12 10L19 4" />
                              </svg>
                         </AppBadge>
                         <AppBadge $background="linear-gradient(#10b4ff, #0a84ff)">
                              <svg width="23" height="21" viewBox="0 0 23 21">
                                   <path d="M14 14H22L21 20H13Z" fill="#22c8ff" />
                                   <path d="M11 1C17 1 20 5 20 9.500C20 15 15 18 9 17.500L4 20V15C-3 9 3 1 11 1Z" fill="#e9f6ff" />
                              </svg>
                         </AppBadge>
                         <svg width="90" height="26" viewBox="350 43 90 26">
                              <circle cx="367" cy="57" r="12" fill="#0058a8" />
                              <path d="M367 50L374 57L367 64L360 57ZM373 53H381V56H375Z" fill="#fff" />
                              <path d="M368 44L374 50L379 50Q377 46 371 44Z" fill="#0058a8" />
                              <g fill="#4d4d4d">
                                   <circle cx="404.500" cy="56" r="2.800" />
                                   <circle cx="415" cy="56" r="2.800" />
                                   <circle cx="425.500" cy="56" r="2.800" />
                              </g>
                         </svg>
                    </StatusGroup>
                    <StatusGroup><StatusIcons /></StatusGroup>
               </StatusBar>
               <StockHeader />
               <QuotePanel />
               <PeriodTabs>
                    <Tab $width={159}>分时</Tab>
                    <Tab $width={160} $active>五日</Tab>
                    <Tab $width={164}>日K</Tab>
                    <Tab $width={156}>周K</Tab>
                    <Tab $width={164}>月K</Tab>
                    <Tab $width={178}>更多<Caret $w={7} $h={12} $color="#666" $left={9} /></Tab>
                    <Tab $width={83}><GearIcon /></Tab>
               </PeriodTabs>
               <PriceLegend>
                    <LegendItem $width={108} $color={colors.average}>均价：</LegendItem>
                    <LegendItem $width={101} $color={colors.average}>11.25</LegendItem>
                    <LegendItem $width={108}>最新：</LegendItem>
                    <LegendItem $width={112}>10.92</LegendItem>
                    <LegendItem $width={90}>0.64</LegendItem>
                    <LegendItem $width={110}>6.23%</LegendItem>
               </PriceLegend>
               <PriceChartPanel />
               <MacdPanel />
               <Dates>
                    {dates.map((date) => (
                         <span key={date}>{date}</span>
                    ))}
               </Dates>
               <NoticeWrap>
                    <Notice>
                         <svg width="47" height="40" viewBox="0 0 47 40" fill="#ea5504">
                              <path d="M1 13H5.500V28H1ZM9 12L42 2V0H46.500V40H42V37L32 34L29 37L16 33V29L9 28Z" />
                         </svg>
                         <NoticeText>精彩！目标止盈年化8%，刚止盈57期，又发车啦</NoticeText>
                         <Divider />
                         <svg width="34" height="32" viewBox="0 0 34 32" stroke="#d95a14" strokeWidth="3"><path d="M2 1L32 31M32 1L2 31" /></svg>
                    </Notice>
               </NoticeWrap>
               <SectionTabs>
                    {sections.map((name, index) => (
                         <Tab key={name} $width={146.8} $active={index === 0}>{name}</Tab>
                    ))}
               </SectionTabs>
               <Cards>
                    <PopularityCard />
                    <VersusCard />
               </Cards>
               <Footer />
          </Page>
     );
}

export default App;
